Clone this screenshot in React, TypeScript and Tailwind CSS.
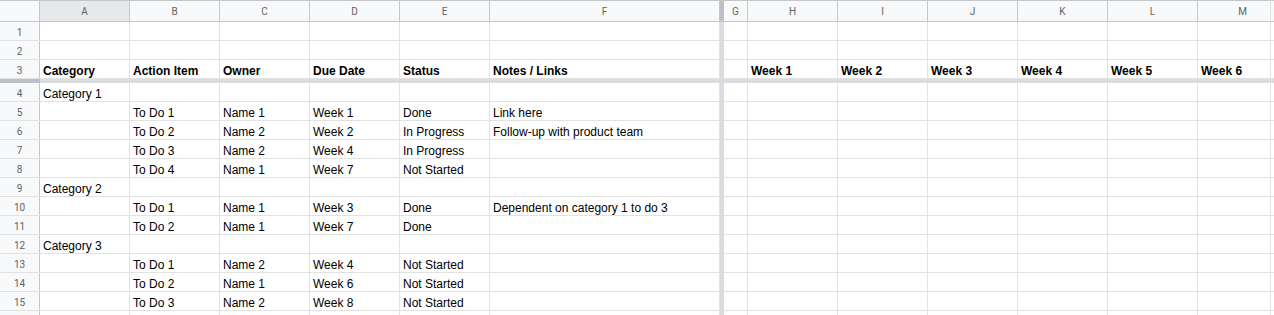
import React from 'react'

type Col = { key: string; w: string }

// frozen columns (left of the freeze bar) and the scrolling ones
const leftCols: Col[] = [
  { key: 'A', w: 'w-[90px]' },
  { key: 'B', w: 'w-[90px]' },
  { key: 'C', w: 'w-[90px]' },
  { key: 'D', w: 'w-[90px]' },
  { key: 'E', w: 'w-[90px]' },
  { key: 'F', w: 'w-[230px]' },
]

const rightCols: Col[] = [
  { key: 'G', w: 'w-[24px]' },
  { key: 'H', w: 'w-[90px]' },
  { key: 'I', w: 'w-[90px]' },
  { key: 'J', w: 'w-[90px]' },
  { key: 'K', w: 'w-[90px]' },
  { key: 'L', w: 'w-[90px]' },
  { key: 'M', w: 'w-[90px]' },
]

const headerRows: { n: number; left: string[]; right: string[]; bold?: boolean }[] = [
  { n: 1, left: [], right: [] },
  { n: 2, left: [], right: [] },
  {
    n: 3,
    left: ['Category', 'Action Item', 'Owner', 'Due Date', 'Status', 'Notes / Links'],
    right: ['', 'Week 1', 'Week 2', 'Week 3', 'Week 4', 'Week 5', 'Week 6'],
    bold: true,
  },
]

const bodyRows: { n?: number; left: string[] }[] = [
  { n: 4, left: ['Category 1'] },
  { n: 5, left: ['', 'To Do 1', 'Name 1', 'Week 1', 'Done', 'Link here'] },
  { n: 6, left: ['', 'To Do 2', 'Name 2', 'Week 2', 'In Progress', 'Follow-up with product team'] },
  { n: 7, left: ['', 'To Do 3', 'Name 2', 'Week 4', 'In Progress'] },
  { n: 8, left: ['', 'To Do 4', 'Name 1', 'Week 7', 'Not Started'] },
  { n: 9, left: ['Category 2'] },
  { n: 10, left: ['', 'To Do 1', 'Name 1', 'Week 3', 'Done', 'Dependent on category 1 to do 3'] },
  { n: 11, left: ['', 'To Do 2', 'Name 1', 'Week 7', 'Done'] },
  { n: 12, left: ['Category 3'] },
  { n: 13, left: ['', 'To Do 1', 'Name 2', 'Week 4', 'Not Started'] },
  { n: 14, left: ['', 'To Do 2', 'Name 1', 'Week 6', 'Not Started'] },
  { n: 15, left: ['', 'To Do 3', 'Name 2', 'Week 8', 'Not Started'] },
  // row 16 only peeks in at the bottom edge
  { left: [] },
]

function Cell({ w, text, bold }: { w: string; text?: string; bold?: boolean }) {
  return (
    <div
      className={`${w} shrink-0 h-full border-r border-[#e2e2e3] px-[3px] pt-px text-[12px] leading-[20px] text-black whitespace-nowrap ${
        bold ? 'font-bold' : ''
      }`}
    >
      {text}
    </div>
  )
}

function RowHead({ n }: { n?: number }) {
  return (
    <div className="w-[40px] shrink-0 h-full bg-[#f8f9fa] border-r border-[#c4c7c5] flex items-center justify-center pt-[3px] text-[10px] text-[#5f6368] font-['Roboto',sans-serif]">
      {n}
    </div>
  )
}

function Row({ n, left, right = [], bold }: { n?: number; left: string[]; right?: string[]; bold?: boolean }) {
  return (
    <div className="flex h-[19px] border-b border-[#e2e2e3]">
      <RowHead n={n} />
      {leftCols.map((c, i) => (
        <Cell key={c.key} w={c.w} text={left[i]} bold={bold} />
      ))}
      <div className="w-[4px] shrink-0 h-[calc(100%+1px)] bg-[#dadce0]" />
      {rightCols.map((c, i) => (
        <Cell key={c.key} w={c.w} text={right[i]} bold={bold} />
      ))}
    </div>
  )
}

export default function App() {
  return (
    <div className="relative w-[1274px] h-[315px] overflow-hidden bg-white font-['Liberation_Sans',Arial,sans-serif]">
      {/* Column letters */}
      <div className="flex h-[22px] border-t border-b border-[#c4c7c5] bg-[#f8f9fa]">
        <div className="w-[40px] shrink-0 h-full border-r border-[#c4c7c5]" />
        {leftCols.map(c => (
          <div
            key={c.key}
            className={`${c.w} shrink-0 h-full border-r border-[#c4c7c5] flex items-center justify-center text-[10px] text-[#5f6368] font-['Roboto',sans-serif] ${
              c.key === 'A' ? 'bg-[#e6e8eb]' : ''
            }`}
          >
            {c.key}
          </div>
        ))}
        <div className="w-[4px] shrink-0 h-full bg-[#bdc1c6]" />
        {rightCols.map(c => (
          <div
            key={c.key}
            className={`${c.w} shrink-0 h-full border-r border-[#c4c7c5] flex items-center justify-center text-[10px] text-[#5f6368] font-['Roboto',sans-serif]`}
          >
            {c.key}
          </div>
        ))}
      </div>

      {headerRows.map(r => (
        <Row key={r.n} n={r.n} left={r.left} right={r.right} bold={r.bold} />
      ))}

      {/* Freeze bar */}
      <div className="flex h-[4px]">
        <div className="w-[40px] shrink-0 bg-[#bdc1c6]" />
        <div className="flex-1 bg-[#dadce0]" />
      </div>

      {bodyRows.map((r, i) => (
        <Row key={i} n={r.n} left={r.left} />
      ))}

      {/* scroll area edge */}
      <div className="absolute top-0 bottom-0 left-[1270px] w-px bg-[#e2e2e3]" />
    </div>
  )
}
